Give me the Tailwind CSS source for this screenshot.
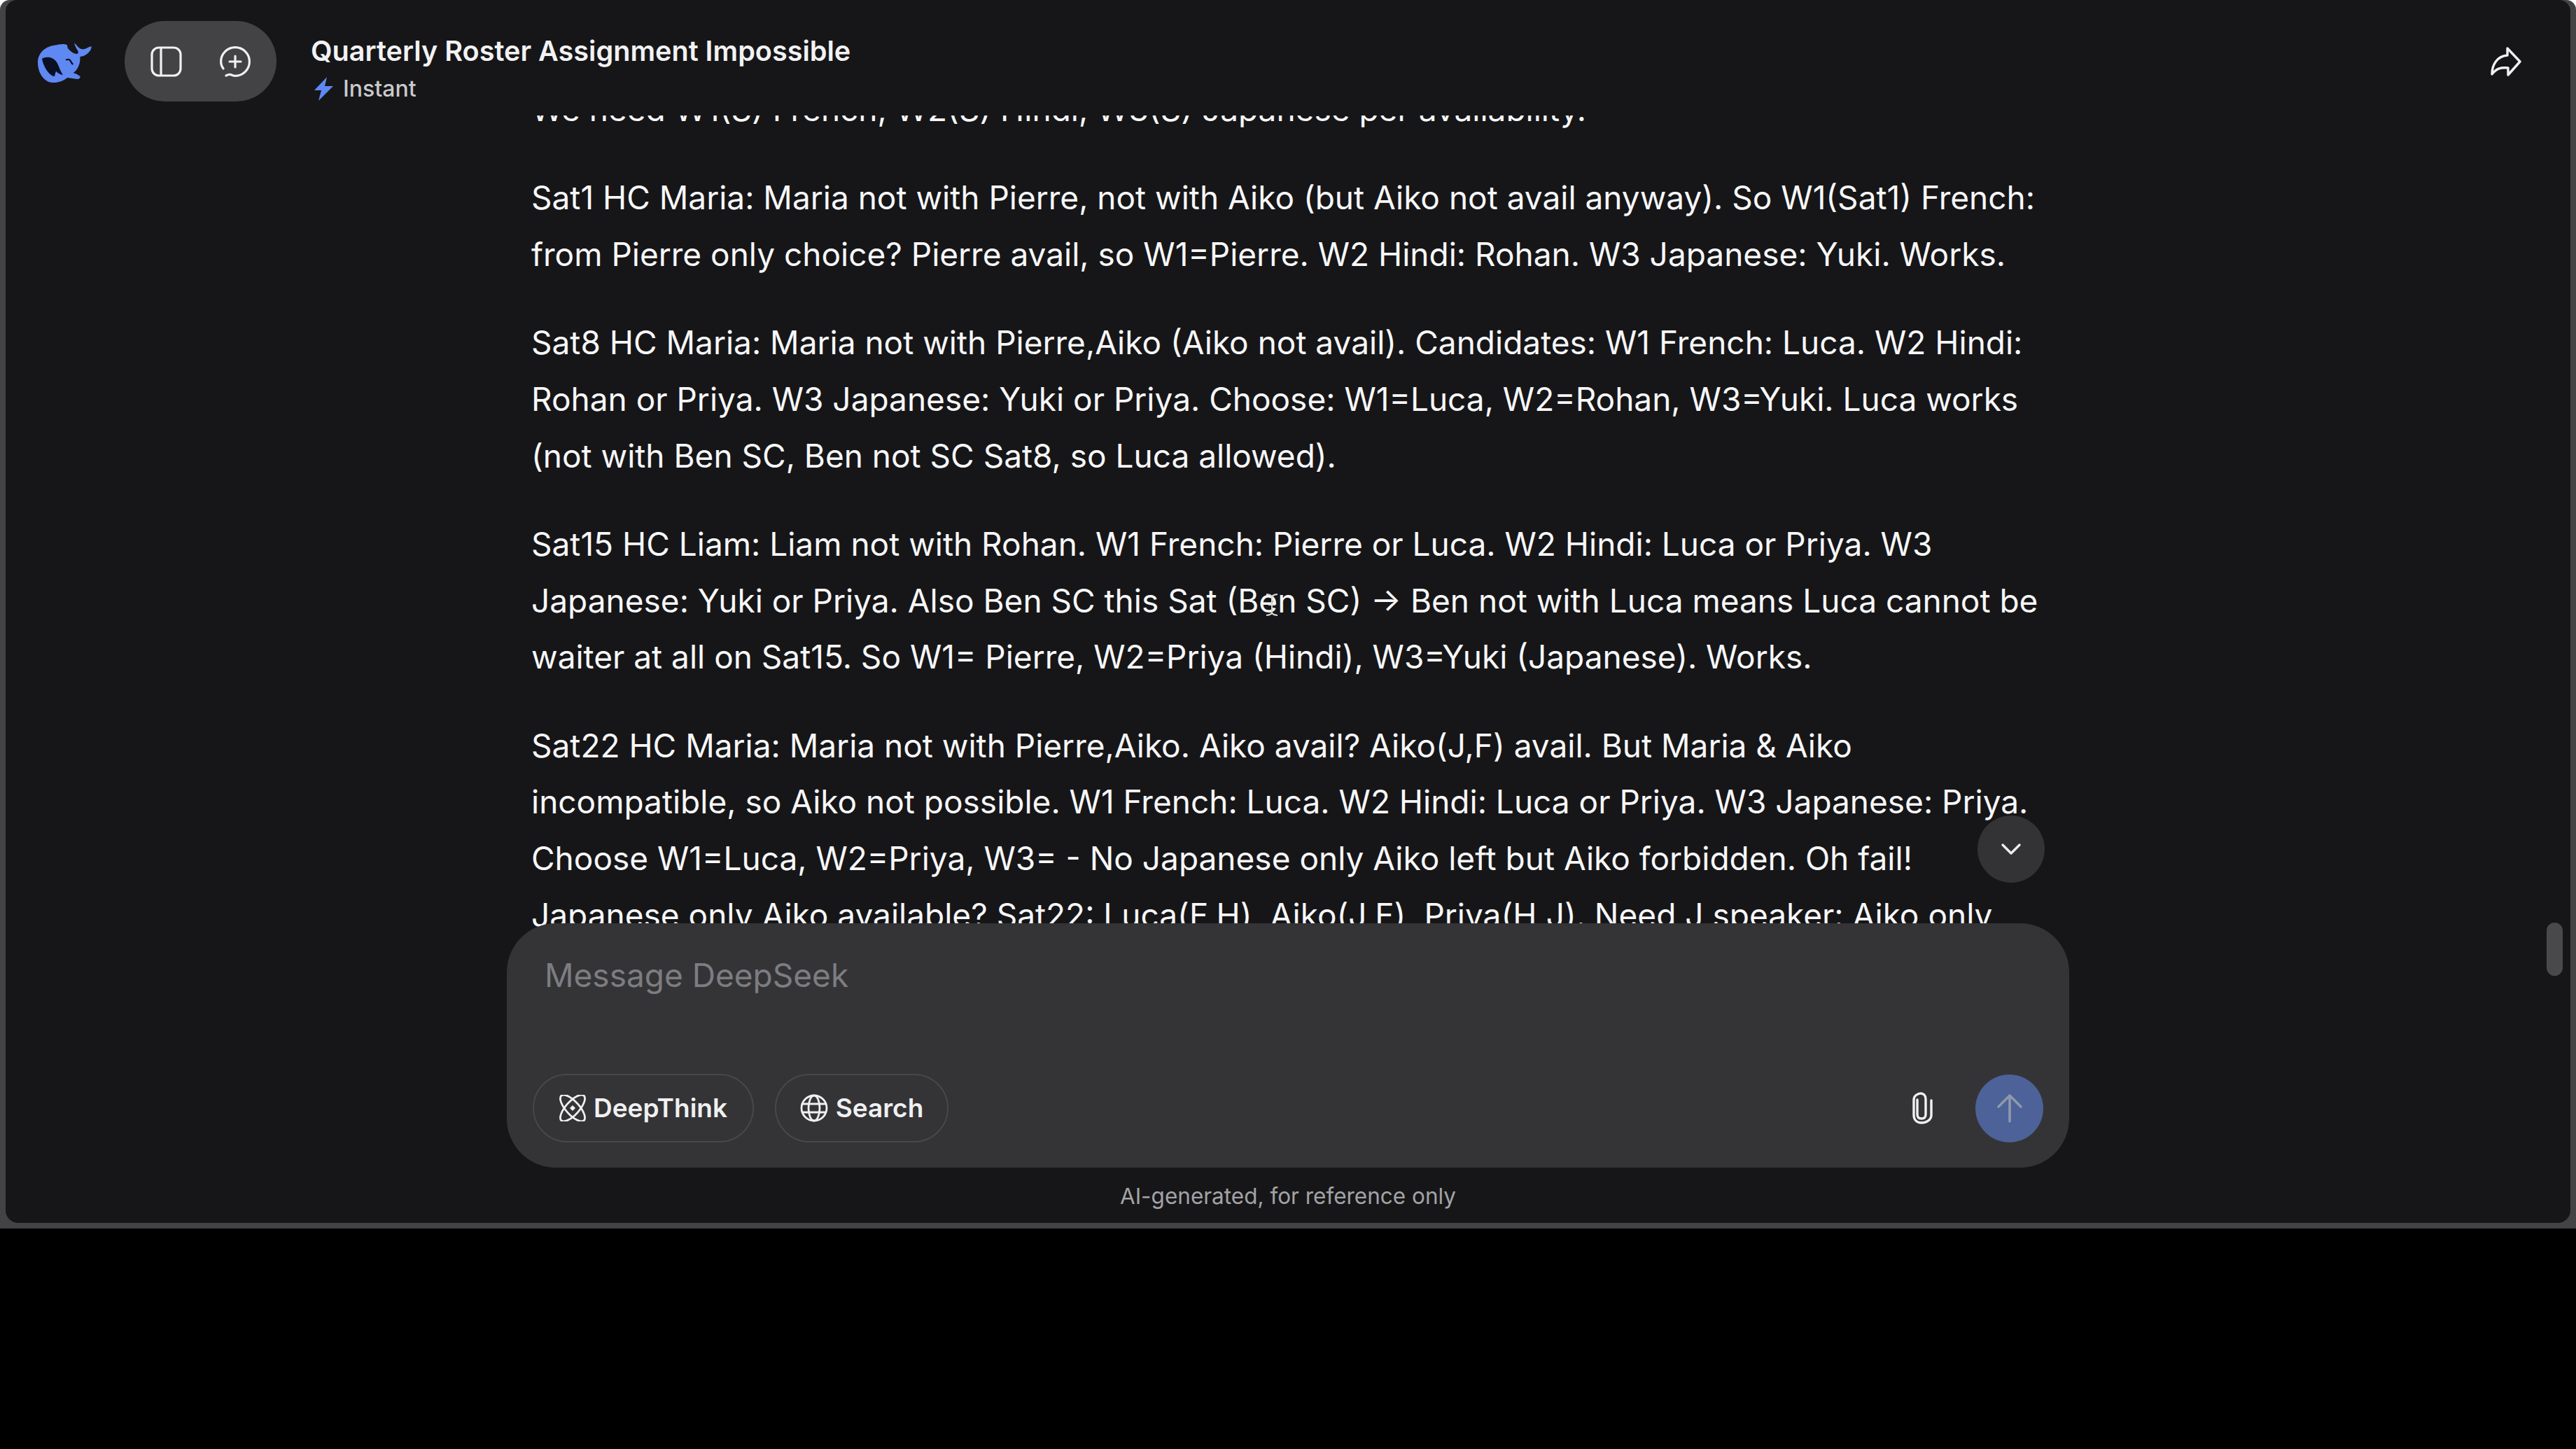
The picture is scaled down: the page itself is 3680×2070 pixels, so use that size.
<!DOCTYPE html>
<html lang="en">
<head>
  <meta charset="UTF-8">
  <title>Quarterly Roster Assignment Impossible - DeepSeek</title>
  <script src="https://cdn.jsdelivr.net/npm/@tailwindcss/browser@4"></script>
</head>
<body class="bg-black w-[3680px] h-[2070px] overflow-hidden font-['Inter','Noto_Sans',sans-serif]">
  <!-- Window, white shows only at the two outer top corners -->
  <div class="w-full h-[1755px] bg-[linear-gradient(#fff_0_20px,#000_20px)]">
    <div class="w-full h-full bg-[#434345] px-[8px] pb-[8px] rounded-t-[14px]">
      <div class="relative h-full bg-[#161618] rounded-t-[16px] rounded-b-[18px] flex flex-col overflow-hidden">

        <!-- Header -->
        <header class="h-[165px] shrink-0 flex items-start pt-[30px] pl-[32px] pr-[70px] text-white">
          <svg class="w-[110px] h-[80px] mt-[20px] shrink-0" viewBox="0 0 330 240">
            <path fill="#6088f2" d="M42 118C42 78 72 50 112 44C132 41 152 36 165 41C171 45 167 53 174 61C183 71 196 81 208 81C216 81 217 75 213 67C207 57 200 45 198 34C206 40 213 52 223 58C231 63 241 61 252 56C260 53 267 49 272 49C272 61 266 71 256 79C245 88 234 93 223 93C224 105 223 117 218 130C213 144 205 154 194 163C206 164 213 172 224 177C224 185 218 190 210 189L169 183C147 199 127 205 103 204C75 203 42 170 42 118Z"/>
            <path fill="#0a1024" d="M60 101C85 89 110 96 124 118C132 131 136 152 150 171C138 169 128 164 120 155C117 163 116 170 113 178C89 171 67 139 60 101Z"/>
            <path fill="none" stroke="#0a1024" stroke-width="7" stroke-linecap="round" d="M165 106C173 103 179 105 182 111C184 115 186 120 191 124"/>
          </svg>
          <div class="ml-[28px] w-[217px] h-[115px] shrink-0 rounded-full bg-[#434345] flex items-center pl-[37px] gap-[54px]">
            <svg class="w-[45px] h-[44px]" viewBox="0 0 45 44" fill="none" stroke="#f1f1f1" stroke-width="3.200">
              <rect x="2" y="2" width="41" height="40" rx="10"/>
              <path d="M15 2v40"/>
            </svg>
            <svg class="w-[44px] h-[44px]" viewBox="0 0 44 44" fill="none" stroke="#f1f1f1" stroke-width="3.200" stroke-linecap="round">
              <path d="M5 32C2 28 1.600 25 1.600 22A20.400 20.400 0 1 1 22 42.400c-3 0-5-2-8-2-2 0-3 .6-5 1.600"/>
              <path d="M22 14v16M14 22h16"/>
            </svg>
          </div>
          <div class="ml-[49px] mt-[13px] flex flex-col">
            <h1 class="text-[39.600px] leading-[60px] font-semibold text-[#f2f2f3] whitespace-nowrap">Quarterly Roster Assignment Impossible</h1>
            <div class="mt-[1px] pl-[4px] flex items-center gap-[13px] text-[32px] leading-[46px] font-medium text-[#c9c9cc]">
              <svg class="w-[29px] h-[34px]" viewBox="0 0 29 34"><path fill="#6088f2" d="M19 0 1 19h10L7 34 28 13H16z"/></svg>
              <span>Instant</span>
            </div>
          </div>
          <svg class="ml-auto mt-[37px] w-[44px] h-[42px]" viewBox="0 0 44 42" fill="none" stroke="#f1f1f1" stroke-width="3.400" stroke-linejoin="round">
            <path d="M24 2 42 21 25 40V30C14 29 8 31 2 39 2 26 9 13 24 12z"/>
          </svg>
        </header>

        <!-- Messages, runs on behind the composer's rounded corners -->
        <main class="flex-1 min-h-0 -mb-[70px] overflow-hidden relative">
          <div class="w-[2180px] ml-[751px] -mt-[49px] text-[46px] leading-[80.700px] text-[#f7f7f8] flex flex-col gap-[45.600px]">
            <p>We need W1(S) French, W2(S) Hindi, W3(S) Japanese per availability.</p>
            <p>Sat1 HC Maria: Maria not with Pierre, not with Aiko (but Aiko not avail anyway). So W1(Sat1) French: from Pierre only choice? Pierre avail, so W1=Pierre. W2 Hindi: Rohan. W3 Japanese: Yuki. Works.</p>
            <p>Sat8 HC Maria: Maria not with Pierre,Aiko (Aiko not avail). Candidates: W1 French: Luca. W2 Hindi: Rohan or Priya. W3 Japanese: Yuki or Priya. Choose: W1=Luca, W2=Rohan, W3=Yuki. Luca works (not with Ben SC, Ben not SC Sat8, so Luca allowed).</p>
            <p>Sat15 HC Liam: Liam not with Rohan. W1 French: Pierre or Luca. W2 Hindi: Luca or Priya. W3 Japanese: Yuki or Priya. Also Ben SC this Sat (Ben SC) → Ben not with Luca means Luca cannot be waiter at all on Sat15. So W1= Pierre, W2=Priya (Hindi), W3=Yuki (Japanese). Works.</p>
            <p>Sat22 HC Maria: Maria not with Pierre,Aiko. Aiko avail? Aiko(J,F) avail. But Maria &amp; Aiko incompatible, so Aiko not possible. W1 French: Luca. W2 Hindi: Luca or Priya. W3 Japanese: Priya. Choose W1=Luca, W2=Priya, W3= - No Japanese only Aiko left but Aiko forbidden. Oh fail! Japanese only Aiko available? Sat22: Luca(F,H), Aiko(J,F), Priya(H,J). Need J speaker: Aiko only</p>
          </div>
          <!-- mouse cursor -->
          <svg class="absolute left-[1797px] top-[683px] w-[24px] h-[32px]" viewBox="0 0 24 32" fill="none" stroke="#d8d8d8" stroke-width="2">
            <path d="M4 1c4 0 6 1 8 3 2-2 4-3 8-3M12 4v24M4 31c4 0 6-1 8-3 2 2 4 3 8 3M7 16h10"/>
          </svg>
          <button class="absolute left-[2817px] top-[1000px] w-[96px] h-[96px] rounded-full bg-[#333336] flex items-center justify-center">
            <svg class="w-[30px] h-[18px]" viewBox="0 0 30 18" fill="none" stroke="#eee" stroke-width="3.400" stroke-linecap="round" stroke-linejoin="round"><path d="M3 3l12 12L27 3"/></svg>
          </button>
        </main>

        <!-- Composer -->
        <div class="relative shrink-0 mx-auto w-[2232px] h-[349px] rounded-[70px] bg-[#343437] pl-[37px] pr-[37px] pt-[39px] pb-[36px] flex flex-col justify-between">
          <div class="pl-[17px] text-[46px] leading-[70px] text-[#7d7d80]">Message DeepSeek</div>
          <div class="flex items-center">
            <button class="h-[98px] w-[316px] rounded-full border-2 border-[#48484b] flex items-center justify-center gap-[11px] text-[#f0f0f1] text-[37px] font-semibold">
              <svg class="w-[38px] h-[38px]" viewBox="0 0 38 38" fill="none" stroke="#f0f0f1" stroke-width="2.800">
                <ellipse cx="19" cy="19" rx="9.500" ry="24" transform="rotate(-42 19 19)"/>
                <ellipse cx="19" cy="19" rx="9.500" ry="24" transform="rotate(42 19 19)"/>
                <path fill="#f0f0f1" stroke="none" d="M19 15l4 4-4 4-4-4z"/>
              </svg>
              DeepThink
            </button>
            <button class="ml-[30px] h-[98px] w-[248px] rounded-full border-2 border-[#48484b] flex items-center justify-center gap-[11px] text-[#f0f0f1] text-[37px] font-semibold">
              <svg class="w-[40px] h-[40px]" viewBox="0 0 40 40" fill="none" stroke="#f0f0f1" stroke-width="2.800">
                <circle cx="20" cy="20" r="18"/>
                <ellipse cx="20" cy="20" rx="8" ry="18"/>
                <path d="M3 14h34M3 26h34"/>
              </svg>
              Search
            </button>
            <svg class="ml-auto w-[36px] h-[46px]" viewBox="0 0 36 46" fill="none" stroke="#f0f0f1" stroke-width="3.400" stroke-linecap="round">
              <path d="M12 11v21c0 4 2.500 6 6 6s6-2 6-6V10C24 5 21 2 17 2S7 5 7 11v22c0 7 4.500 11 11 11s14-4 14-11V12"/>
            </svg>
            <button class="ml-[59px] w-[97px] h-[97px] rounded-full bg-[#4d6298] flex items-center justify-center">
              <svg class="w-[40px] h-[42px]" viewBox="0 0 40 42" fill="none" stroke="#8f98ac" stroke-width="3.600" stroke-linecap="round" stroke-linejoin="round"><path d="M20 40V3M4 19 20 3l16 16"/></svg>
            </button>
          </div>
        </div>

        <!-- Footer note -->
        <p class="shrink-0 h-[79px] pt-[21px] text-center text-[31.500px] leading-[40px] text-[#a3a3a6]">AI-generated, for reference only</p>

        <!-- Scrollbar -->
        <div class="absolute left-[3630px] top-[1318px] w-[23px] h-[76px] rounded-full bg-[#49494c]"></div>
      </div>
    </div>
  </div>
</body>
</html>
